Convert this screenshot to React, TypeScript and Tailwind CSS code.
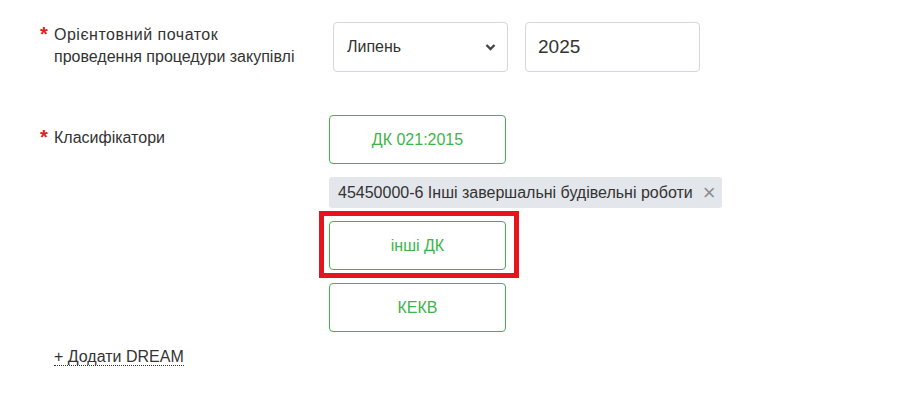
import React from 'react';

const Chevron = () => (
    <svg width="11" height="8" viewBox="0 0 11 8" className="text-[#444]">
        <path d="M1.5 2 L5.5 6 L9.5 2" fill="none" stroke="currentColor" strokeWidth="2.4" />
    </svg>
);

const GreenButton = ({ label }: { label: string }) => (
    <button className="w-[177px] h-[49px] rounded-[4px] border border-[#3cb54a] bg-white text-[16px] text-[#3cb54a]">
        {label}
    </button>
);

const App = () => {
    return (
        <div className="w-[900px] h-[417px] bg-white pl-[40px] pt-[22px] text-[#333] font-['Liberation_Sans',Arial,sans-serif]">
            <div className="flex">
                <div className="w-[293px] flex pt-[2px]">
                    <span className="text-[#e0201b] text-[20px] font-bold leading-[20px] w-[14px]">*</span>
                    <div className="text-[16px] leading-[22px]">
                        <span className="tracking-[0.5px]">Орієнтовний початок</span>
                        <br />
                        проведення процедури закупівлі
                    </div>
                </div>
                <div className="w-[175px] h-[50px] rounded-[4px] border border-[#d5d8dc] flex items-center justify-between pl-[13px] pr-[11px] text-[16px]">
                    <span>Липень</span>
                    <Chevron />
                </div>
                <div className="ml-[17px] w-[175px] h-[50px] rounded-[4px] border border-[#d5d8dc] flex items-center pl-[12px] text-[19px]">
                    2025
                </div>
            </div>

            <div className="flex mt-[43px]">
                <div className="w-[289px] flex pt-[12px]">
                    <span className="text-[#e0201b] text-[20px] font-bold leading-[20px] w-[14px]">*</span>
                    <div className="text-[16px] leading-[22px]">Класифікатори</div>
                </div>
                <div className="flex flex-col items-start gap-[13px]">
                    <GreenButton label="ДК 021:2015" />
                    <div className="h-[31px] rounded-[3px] bg-[#e3e6eb] flex items-center pl-[9px] pr-[6px] text-[16px] gap-[10px]">
                        <span>45450000-6 Інші завершальні будівельні роботи</span>
                        <span className="text-[#8a8d91] text-[22px] leading-none font-light">×</span>
                    </div>
                    <div className="relative">
                        <GreenButton label="інші ДК" />
                        <div className="absolute left-[-10px] top-[-10px] w-[200px] h-[67px] border-[5px] border-[#e8141c]" />
                    </div>
                    <GreenButton label="КЕКВ" />
                </div>
            </div>

            <div className="pl-[14px] mt-[13px]">
                <span className="text-[16px] leading-[20px] border-b border-dotted border-[#333]">+ Додати DREAM</span>
            </div>
        </div>
    );
};

export default App;
